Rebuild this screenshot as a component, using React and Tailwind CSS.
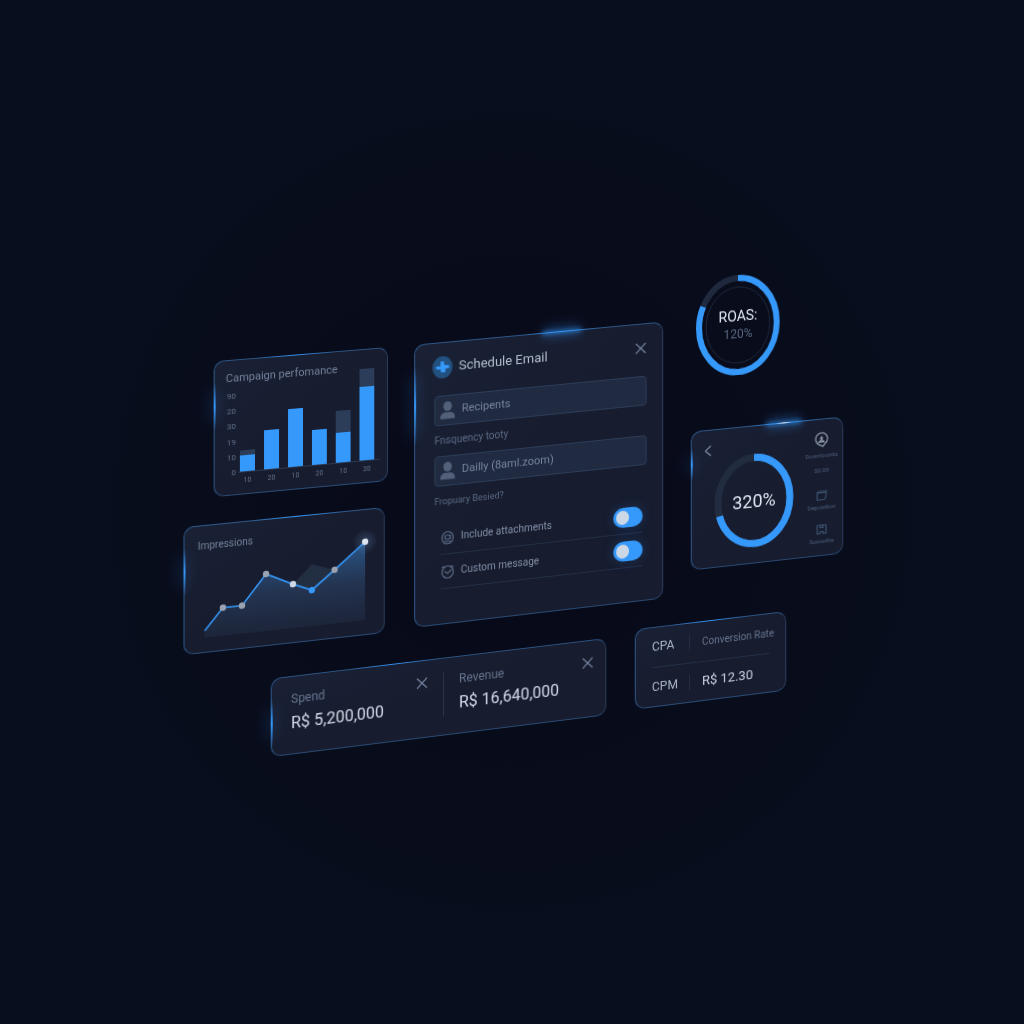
import { useState } from "react";

const bars = [
  { label: "10", value: 16, extra: 5 },
  { label: "20", value: 39, extra: 0 },
  { label: "10", value: 58, extra: 0 },
  { label: "20", value: 35, extra: 0 },
  { label: "10", value: 30, extra: 22 },
  { label: "30", value: 74, extra: 18 },
];

const ticks = ["90", "20", "30", "19", "10", "0"];

const points = [
  { x: 39, y: 84, fill: "#9aa3b2" },
  { x: 58, y: 84, fill: "#9aa3b2" },
  { x: 82, y: 55, fill: "#9aa3b2" },
  { x: 109, y: 68, fill: "#cfd8e6" },
  { x: 128, y: 76, fill: "#3598fb" },
  { x: 151, y: 58, fill: "#9aa3b2" },
  { x: 182, y: 33, fill: "#dbe4f0" },
];

function Card({ className, children }) {
  return (
    <section
      className={`relative shrink-0 rounded-[10px] border border-t-[#2c5687] border-l-[#2c5687] border-r-[#2a3d5c] border-b-[#294a73] bg-linear-to-br from-[#1a2135] via-[#171c2e] to-[#171c2f] ${className}`}
    >
      {children}
    </section>
  );
}

// bright spot on the upper edge of a card
function TopGlow({ className, strong }) {
  return (
    <span className={`pointer-events-none absolute -top-px h-px bg-linear-to-r from-transparent via-[#3598fb] to-transparent ${className}`}>
      {strong && (
        <>
          <span className="absolute inset-x-1/4 -top-px h-[3px] rounded-full bg-[#3598fb]/70 blur-[2px]" />
          <span className="absolute inset-x-1/4 -top-1.5 h-3 rounded-full bg-[#3598fb]/25 blur-[5px]" />
        </>
      )}
    </span>
  );
}

function LeftGlow({ className }) {
  return (
    <span className={`pointer-events-none absolute -left-px w-0.5 bg-linear-to-b from-transparent via-[#3598fb] to-transparent ${className}`}>
      <span className="absolute -left-1.5 inset-y-2 w-3 rounded-full bg-[#3598fb]/10 blur-[6px]" />
    </span>
  );
}

function CloseButton({ label }) {
  return (
    <button type="button" aria-label={label} className="text-[#7786a0]">
      <svg viewBox="0 0 12 12" className="size-3" fill="none" stroke="currentColor" strokeWidth="1.1">
        <path d="M1 1l10 10M11 1L1 11" />
      </svg>
    </button>
  );
}

function UserIcon() {
  return (
    <svg viewBox="0 0 16 18" className="h-[18px] w-4 shrink-0" fill="#536079">
      <ellipse cx="8" cy="5" rx="4.2" ry="4.8" />
      <path d="M.8 17.500v-2.500c.6-2.500 2.600-3.800 5.200-4.200.9.600 3.100.600 4 0 2.600.4 4.600 1.700 5.200 4.200v2.500z" />
    </svg>
  );
}

function Field({ id, label, value }) {
  return (
    <label
      htmlFor={id}
      className="flex h-[30px] items-center gap-1 rounded-[4px] border border-[#2c3d59] bg-[#202a40] px-1"
    >
      <UserIcon />
      <input
        id={id}
        aria-label={label}
        defaultValue={value}
        className="h-6 min-w-0 flex-1 bg-transparent pl-0.5 text-[11px] leading-6 text-[#7685a0] outline-none"
      />
    </label>
  );
}

function ToggleRow({ id, label, icon }) {
  const [on, setOn] = useState(true);

  return (
    <div className="mr-1 ml-1.5 flex h-[34px] items-center border-b border-[#232f46]">
      <svg viewBox="0 0 14 16" className="mr-1.5 h-4 w-3.5" fill="none" stroke="#5b6b86" strokeWidth="1.2">
        {icon}
      </svg>
      <label htmlFor={id} className="flex-1 text-[10px] text-[#8290a8]">{label}</label>
      <input
        id={id}
        type="checkbox"
        checked={on}
        onChange={(e) => setOn(e.target.checked)}
        className="h-5 w-[30px] appearance-none rounded-full bg-[#27344d] p-[3px] shadow-[0_0_14px_rgba(53,152,251,0.2)] before:block before:h-3.5 before:w-[13px] before:rounded-full before:bg-[#cdd8e6] before:content-[''] checked:bg-[#3598fb]"
      />
    </div>
  );
}

function CampaignCard() {
  return (
    <Card className="h-[135px] w-[175px] self-end pt-2.5 pl-[11px] [transform:perspective(1000px)_rotateY(5deg)_skewY(-5deg)]">
      <TopGlow className="left-10 w-20" />
      <LeftGlow className="top-5 h-12" />
      <h2 className="h-4 text-[11px] leading-4 text-[#73829b]">Campaign perfomance</h2>
      <div className="mt-2 flex">
        <ul className="-mt-0.5 flex h-[84px] w-2.5 flex-col justify-between text-right text-[8px] leading-2 text-[#64748d]">
          {ticks.map((t, i) => (
            <li key={i}>{t}</li>
          ))}
        </ul>
        <div className="ml-0.5">
          <div className="flex h-[78px] items-end gap-[9px] border-b border-[#2b3850] pr-1.5 pl-0.5">
            {bars.map((b, i) => (
              <div key={i} className="w-[15px]">
                <div className="bg-[#2b3d58]" style={{ height: b.extra }} />
                <div className="bg-[#3598fb]" style={{ height: b.value }} />
              </div>
            ))}
          </div>
          <div className="mt-1 flex gap-[9px] pl-0.5 text-center text-[7px] leading-2 text-[#64748d]">
            {bars.map((b, i) => (
              <span key={i} className="w-[15px]">{b.label}</span>
            ))}
          </div>
        </div>
      </div>
    </Card>
  );
}

function ImpressionsCard() {
  return (
    <Card className="h-[127px] w-[202px] pt-3 [transform:perspective(1000px)_rotateY(5deg)_skewY(-6deg)]">
      <TopGlow className="left-16 w-24" />
      <LeftGlow className="top-5 h-12" />
      <h2 className="h-4 pl-[13px] text-[10px] leading-4 text-[#73829b]">Impressions</h2>
      <svg viewBox="1 29 200 97" className="block w-full overflow-visible">
        <defs>
          <linearGradient id="area" x1="0" y1="0" x2="0" y2="1">
            <stop offset="0" stopColor="#2f6ba8" stopOpacity="0.75" />
            <stop offset="0.5" stopColor="#2c456a" stopOpacity="0.6" />
            <stop offset="1" stopColor="#222e44" stopOpacity="0.5" />
          </linearGradient>
          <radialGradient id="dot">
            <stop offset="0" stopColor="#5b86b5" stopOpacity="0.35" />
            <stop offset="1" stopColor="#5b86b5" stopOpacity="0" />
          </radialGradient>
        </defs>
        <path d="M109 68L128 50L151 58L128 76z" fill="#222e42" />
        <path d="M21 105L39 84L58 84L82 55L109 68L128 76L151 58L182 33V112H21z" fill="url(#area)" />
        <circle cx="182" cy="33" r="13" fill="url(#dot)" />
        <path d="M21 105L39 84L58 84L82 55L109 68L128 76L151 58L182 33" fill="none" stroke="#3598fb" strokeWidth="1.600" />
        {points.map((p) => (
          <circle key={p.x} cx={p.x} cy={p.y} r="3.2" fill={p.fill} />
        ))}
      </svg>
    </Card>
  );
}

function ScheduleCard() {
  return (
    <Card className="mt-[58px] h-[280px] w-[250px] pt-3 pr-4 pl-[19px] [transform:perspective(1000px)_rotateY(5deg)_skewY(-6deg)]">
      <TopGlow className="left-[106px] w-20" strong />
      <LeftGlow className="top-5 h-20" />
      <header className="-ml-0.5 flex h-6 items-center">
        <svg viewBox="0 0 20 22" className="h-[22px] w-5">
          <ellipse cx="10" cy="11" rx="10" ry="11" fill="#22507f" />
          <path d="M8 5.200h3.600v3.600l5 .8v2.400l-4 .8.400 3.200h-4.600v-2.800l-4.800-.6v-2.800h4.400z" fill="#3598fb" />
        </svg>
        <h2 className="ml-1.5 flex-1 text-[13px] text-[#b3becd]">Schedule Email</h2>
        <CloseButton label="Close schedule" />
      </header>
      <form className="mt-4">
        <Field id="recipients" label="Recipents" value="Recipents" />
        <p className="text-[10px] leading-[30px] text-[#5b6a84]">Fnsquency tooty</p>
        <Field id="frequency" label="Frequency" value="Dailly (8aml.zoom)" />
        <p className="text-[9px] leading-[30px] text-[#5b6a84]">Fropuary Besied?</p>
        <div className="mt-1">
          <ToggleRow
            id="attachments"
            label="Include attachments"
            icon={
              <>
                <ellipse cx="7" cy="8.500" rx="5.500" ry="6" />
                <rect x="4.500" y="6" width="5" height="4" rx="1.500" />
                <path d="M4 12h6.500M9.500 6v4" />
              </>
            }
          />
          <ToggleRow
            id="message"
            label="Custom message"
            icon={
              <>
                <ellipse cx="7" cy="8.500" rx="5.500" ry="6" />
                <path d="M4 7.500l3 2.500 3.500-3.500M1.500 4l2-1.500M10.500 2.500l2 1.500" />
              </>
            }
          />
        </div>
      </form>
    </Card>
  );
}

function RoasGauge() {
  return (
    <div className="ml-[5px] grid h-[100px] w-[84px] place-items-center [transform:perspective(1000px)_rotateY(5deg)_skewY(-5deg)]">
      <svg viewBox="0 0 84 100" className="col-start-1 row-start-1 h-[100px] w-[84px]" fill="none">
        <path d="M42 3A39 47 0 0 1 42 97A39 47 0 0 1 42 3" stroke="#1f293e" strokeWidth="6" />
        <path d="M42 3A39 47 0 0 1 42 97A39 47 0 0 1 42 3" pathLength="100" strokeDasharray="83 100" stroke="#3598fb" strokeWidth="6" />
        <ellipse cx="42" cy="50" rx="32" ry="38" stroke="#1d273b" strokeWidth="1" />
      </svg>
      <div className="col-start-1 row-start-1 text-center">
        <p className="text-[14px] leading-[18px] text-[#dde6f2]">ROAS:</p>
        <p className="text-[12px] leading-[18px] text-[#56667f]">120%</p>
      </div>
    </div>
  );
}

function GaugeCard() {
  return (
    <Card className="mt-[49px] flex h-[138px] w-[153px] [transform:perspective(1000px)_rotateY(5deg)_skewY(-6deg)]">
      <TopGlow className="left-14 w-18" strong />
      <TopGlow className="left-21 w-4 via-white" />
      <LeftGlow className="top-4 h-8" />
      <button type="button" aria-label="Back" className="mt-3.5 ml-3 h-3 w-2 text-[#7786a0]">
        <svg viewBox="0 0 8 12" className="h-3 w-2" fill="none" stroke="currentColor" strokeWidth="1.200">
          <path d="M7 1L1.500 6L7 11" />
        </svg>
      </button>
      <div className="mt-[27px] ml-0.5 grid h-[94px] w-20 place-items-center">
        <svg viewBox="0 0 80 94" className="col-start-1 row-start-1 h-[94px] w-20" fill="none">
          <path d="M40 4A36 43 0 0 1 40 90A36 43 0 0 1 40 4" stroke="#222c41" strokeWidth="7" />
          <path d="M40 4A36 43 0 0 1 40 90A36 43 0 0 1 40 4" pathLength="100" strokeDasharray="70 100" stroke="#3598fb" strokeWidth="7" />
        </svg>
        <p className="col-start-1 row-start-1 text-[18px] text-[#dde6f2]">320%</p>
      </div>
      <ul className="mt-3 ml-3 flex w-8 flex-col items-center text-[6px] leading-2 text-[#4d5f7b]">
        <li className="flex flex-col items-center">
          <svg viewBox="0 0 14 16" className="h-4 w-3.5" fill="none" stroke="#a3afc1" strokeWidth="1.100">
            <path d="M8.500 15L4.500 13A6 6.200 0 1 1 10.500 12.500z" />
            <path d="M7 4.500v4M7 8l-2.500 2.500h5L7 8M5.500 6.500h3" />
          </svg>
          <span className="mt-1">Downlounds</span>
        </li>
        <li className="mt-[7px]">$0.09</li>
        <li className="mt-[15px] flex flex-col items-center">
          <svg viewBox="0 0 12 12" className="size-3" fill="none" stroke="#3d526f" strokeWidth="1.200">
            <path d="M1.500 3.500L3 2h8L10 9.500 8.500 10.500h-7zM2 3.500h8" />
          </svg>
          <span className="mt-0.5">Deposition</span>
        </li>
        <li className="mt-3 flex flex-col items-center">
          <svg viewBox="0 0 12 12" className="size-3" fill="none" stroke="#3d526f" strokeWidth="1.200">
            <path d="M1.500 2h3v2.500h3V2h3v8.500h-3V8.500h-3v2h-3zM6 1v2" />
          </svg>
          <span className="mt-0.5">Susuoths</span>
        </li>
      </ul>
    </Card>
  );
}

function Amount({ title, value }) {
  return (
    <div className="flex flex-1 items-start justify-between">
      <div>
        <h2 className="text-[12px] leading-4 text-[#66758f]">{title}</h2>
        <p className="mt-1 text-[16px] leading-6 whitespace-nowrap text-[#d3dcea]">{value}</p>
      </div>
      <div className="flex h-4 items-center">
        <CloseButton label={`Close ${title}`} />
      </div>
    </div>
  );
}

function AmountsCard() {
  return (
    <Card className="mt-[38px] flex h-[78px] w-[336px] gap-[15px] pt-3.5 pr-3 pl-[19px] [transform:perspective(1000px)_rotateY(3deg)_skewY(-7deg)]">
      <TopGlow className="left-18 w-24" />
      <LeftGlow className="top-5 h-12" />
      <Amount title="Spend" value="R$ 5,200,000" />
      <span className="h-11 w-px bg-[#27344c]" />
      <Amount title="Revenue" value="R$ 16,640,000" />
    </Card>
  );
}

function CostsCard() {
  return (
    <Card className="h-20 w-[152px] px-4 [transform:perspective(1000px)_rotateY(5deg)_skewY(-7deg)]">
      <TopGlow className="left-8 w-20" />
      <table className="w-full table-fixed text-left">
        <tbody>
          <tr className="h-[39px] border-b border-[#232f46]">
            <th className="w-[37px] p-0 text-[12px] font-normal text-[#aab6c7]">CPA</th>
            <td className="p-0">
              <div className="flex h-4 items-center border-l border-[#232f46] pl-3 text-[10px] whitespace-nowrap text-[#66758f]">
                Conversion Rate
              </div>
            </td>
          </tr>
          <tr className="h-[39px]">
            <th className="p-0 text-[12px] font-normal text-[#aab6c7]">CPM</th>
            <td className="p-0">
              <div className="flex h-4 items-center border-l border-[#232f46] pl-3 text-[13px] whitespace-nowrap text-[#cbd5e3]">
                R$ 12.30
              </div>
            </td>
          </tr>
        </tbody>
      </table>
    </Card>
  );
}

export default function App() {
  return (
    <main className="flex min-h-screen items-center justify-center bg-[#080d1c] bg-[radial-gradient(circle,#070919_0%,#080b1a_30%,#080e1d_60%)] pb-3.5 pl-1 font-[Roboto,sans-serif]">
      <div>
        <div className="flex items-start gap-[26px]">
          <div className="flex w-[205px] flex-col gap-7 pt-[79px]">
            <CampaignCard />
            <ImpressionsCard />
          </div>
          <ScheduleCard />
          <div>
            <RoasGauge />
            <GaugeCard />
          </div>
        </div>
        <div className="-mt-6 flex items-start gap-[27px] pl-[88px]">
          <AmountsCard />
          <CostsCard />
        </div>
      </div>
    </main>
  );
}
